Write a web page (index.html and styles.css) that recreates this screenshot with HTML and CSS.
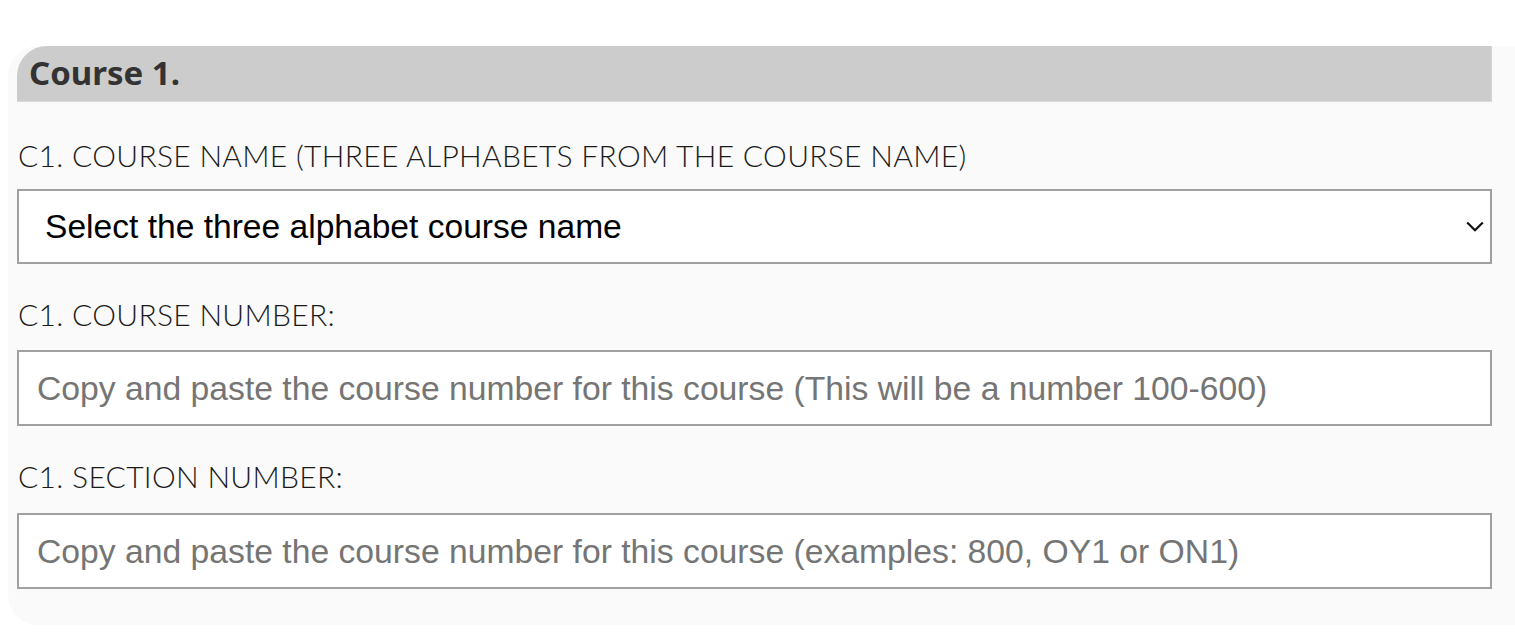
FILE: index.html
```html
<!DOCTYPE html>
<html lang="en">
<head>
<meta charset="utf-8">
<title>Course 1</title>
<link rel="stylesheet" href="styles.css">
</head>
<body>
<div class="card">
  <div class="card-header">Course 1.</div>
  <div class="field field-name">
    <label class="field-label" for="c1name">C1. COURSE NAME (THREE ALPHABETS FROM THE COURSE NAME)</label>
    <div class="select-wrap">
      <select id="c1name" class="field-select">
        <option>Select the three alphabet course name</option>
      </select>
      <svg class="chevron" width="18" height="11" viewBox="0 0 18 11" aria-hidden="true"><path d="M1.2 1.5 L9 9.2 L16.8 1.5" fill="none" stroke="#111" stroke-width="2.2"/></svg>
    </div>
  </div>
  <div class="field field-number">
    <label class="field-label" for="c1num">C1. COURSE NUMBER:</label>
    <input id="c1num" class="field-input" type="text" placeholder="Copy and paste the course number for this course (This will be a number 100-600)">
  </div>
  <div class="field field-section">
    <label class="field-label" for="c1sec">C1. SECTION NUMBER:</label>
    <input id="c1sec" class="field-input" type="text" placeholder="Copy and paste the course number for this course (examples: 800, OY1 or ON1)">
  </div>
</div>
</body>
</html>
```

FILE: styles.css
```css
html, body {
  margin: 0;
  padding: 0;
  background: #ffffff;
  overflow: hidden;
}

.card {
  margin: 46px 0 0 8px;
  width: 1530px;
  height: 579px;
  box-sizing: border-box;
  background: #fafafa;
  border-radius: 30px 0 0 30px;
  padding: 0 38px 0 9px;
  display: flex;
  flex-direction: column;
}

.card-header {
  width: 1475px;
  height: 56px;
  box-sizing: border-box;
  background: #cccccc;
  border-top-left-radius: 30px;
  border-bottom: 1px solid #d8d8d8;
  border-right: 1px solid #d4d4d4;
  padding: 6px 0 0 12px;
  font-family: "Noto Sans", sans-serif;
  font-weight: 700;
  font-size: 33px;
  line-height: 42px;
  color: #333333;
}

.field {
  width: 1475px;
  display: flex;
  flex-direction: column;
}

.field-label {
  display: block;
  font-family: Lato, sans-serif;
  font-weight: 300;
  font-size: 30px;
  letter-spacing: 0.3px;
  line-height: 34px;
  color: #1a1a1a;
  margin: 36px 0 17px 1px;
}

.field-number .field-label {
  margin: 33px 0 19px 1px;
}

.field-section .field-label {
  margin: 33px 0 20px 1px;
}

.select-wrap {
  position: relative;
}

.field-select {
  display: block;
  width: 100%;
  height: 75px;
  box-sizing: border-box;
  border: 2px solid #a0a0a0;
  border-radius: 0;
  background: #ffffff;
  appearance: none;
  -webkit-appearance: none;
  padding: 0 0 0 26px;
  font-family: "Liberation Sans", Arial, sans-serif;
  font-size: 33.6px;
  color: #000000;
  outline: none;
}

.chevron {
  position: absolute;
  right: 8px;
  top: 32px;
}

.field-input {
  display: block;
  width: 100%;
  height: 76px;
  box-sizing: border-box;
  border: 2px solid #a0a0a0;
  border-radius: 0;
  background: #ffffff;
  padding: 0 0 0 18px;
  font-family: "Liberation Sans", Arial, sans-serif;
  font-size: 33.7px;
  color: #000000;
  outline: none;
}

.field-input::placeholder {
  color: #757575;
  opacity: 1;
}
```
